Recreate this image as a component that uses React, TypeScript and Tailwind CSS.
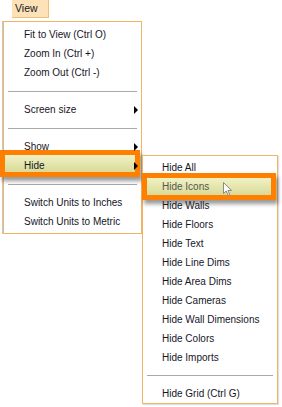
import React from "react";

type Item = { label: string; arrow?: boolean; hot?: boolean } | "sep";

const mainItems: Item[] = [
    { label: "Fit to View (Ctrl O)" },
    { label: "Zoom In (Ctrl +)" },
    { label: "Zoom Out (Ctrl -)" },
    "sep",
    { label: "Screen size", arrow: true },
    "sep",
    { label: "Show", arrow: true },
    { label: "Hide", arrow: true, hot: true },
    "sep",
    { label: "Switch Units to Inches" },
    { label: "Switch Units to Metric" },
];

const subItems: Item[] = [
    { label: "Hide All" },
    { label: "Hide Icons", hot: true },
    { label: "Hide Walls" },
    { label: "Hide Floors" },
    { label: "Hide Text" },
    { label: "Hide Line Dims" },
    { label: "Hide Area Dims" },
    { label: "Hide Cameras" },
    { label: "Hide Wall Dimensions" },
    { label: "Hide Colors" },
    { label: "Hide Imports" },
    "sep",
    { label: "Hide Grid (Ctrl G)" },
];

function Arrow() {
    return <span className="block w-0 h-0 border-y-[4px] border-y-transparent border-l-[4px] border-l-black" />;
}

function Cursor() {
    return (
        <svg className="absolute left-[80px] top-[5px] z-20" width="10" height="15" viewBox="0 0 10 15">
            <path d="M0.5 0.5 L0.5 11.5 L3.2 9 L5.2 13.5 L6.8 12.8 L4.9 8.4 L8.5 8.4 Z"
                fill="#fbfbfb" stroke="#8a8a8a" strokeWidth="1" strokeLinejoin="round" />
        </svg>
    );
}

export default function App() {
    return (
        <div className="relative w-[282px] h-[407px] overflow-hidden bg-white text-[10px] text-[#16161f] font-['Liberation_Sans',Arial,sans-serif]">
            {/* menubar */}
            <div className="flex">
                <div className="ml-[12px] w-[37px] h-[18px] pl-[3px] flex items-center text-[10.5px] bg-[#fde2b8] border-r border-b border-[#f0bd7a]">
                    View
                </div>
            </div>

            {/* main menu */}
            <div className="absolute left-[3px] top-[21px] w-[139px] bg-white border border-[#efb466] pt-[3px] pb-[2px] shadow-[-1px_0_0_#c8c8c8]">
                {mainItems.map((it, i) =>
                    it === "sep" ? (
                        <div key={i} className="h-[18px] flex items-center px-[4px]">
                            <div className="w-full border-t border-[#a9a9a9]" />
                        </div>
                    ) : (
                        <div key={i} className="relative h-[19px] flex items-center justify-between pl-[20px] pr-[3px]">
                            {it.hot && (
                                <div className="absolute left-[-4px] top-[-6px] w-[140px] h-[27px] border-[5px] border-[#ff8000] bg-linear-to-b from-[#f1f2c4] to-[#d9da96] shadow-[2px_4px_4px_rgba(0,0,0,0.4)]" />
                            )}
                            <span className="relative z-10">{it.label}</span>
                            {it.arrow && <span className="relative z-10"><Arrow /></span>}
                        </div>
                    )
                )}
            </div>

            {/* hide submenu */}
            <div className="absolute left-[142px] top-[155px] w-[136px] bg-white border border-[#efb466] pt-[2px] shadow-[1px_1px_1px_rgba(0,0,0,0.12)]">
                {subItems.map((it, i) =>
                    it === "sep" ? (
                        <div key={i} className="h-[17px] flex items-center px-[4px]">
                            <div className="w-full border-t border-[#a9a9a9]" />
                        </div>
                    ) : (
                        <div key={i} className="relative h-[19px] flex items-center pl-[19px]">
                            {it.hot && (
                                <>
                                    <div className="absolute left-[-1px] top-[-4px] w-[134px] h-[27px] border-[5px] border-[#ff8000] bg-linear-to-b from-[#f1f2c4] to-[#d9da96] shadow-[2px_4px_4px_rgba(0,0,0,0.4)]" />
                                    <Cursor />
                                </>
                            )}
                            <span className={"relative z-10" + (it.hot ? " text-[#555]" : "")}>{it.label}</span>
                        </div>
                    )
                )}
            </div>
        </div>
    );
}
